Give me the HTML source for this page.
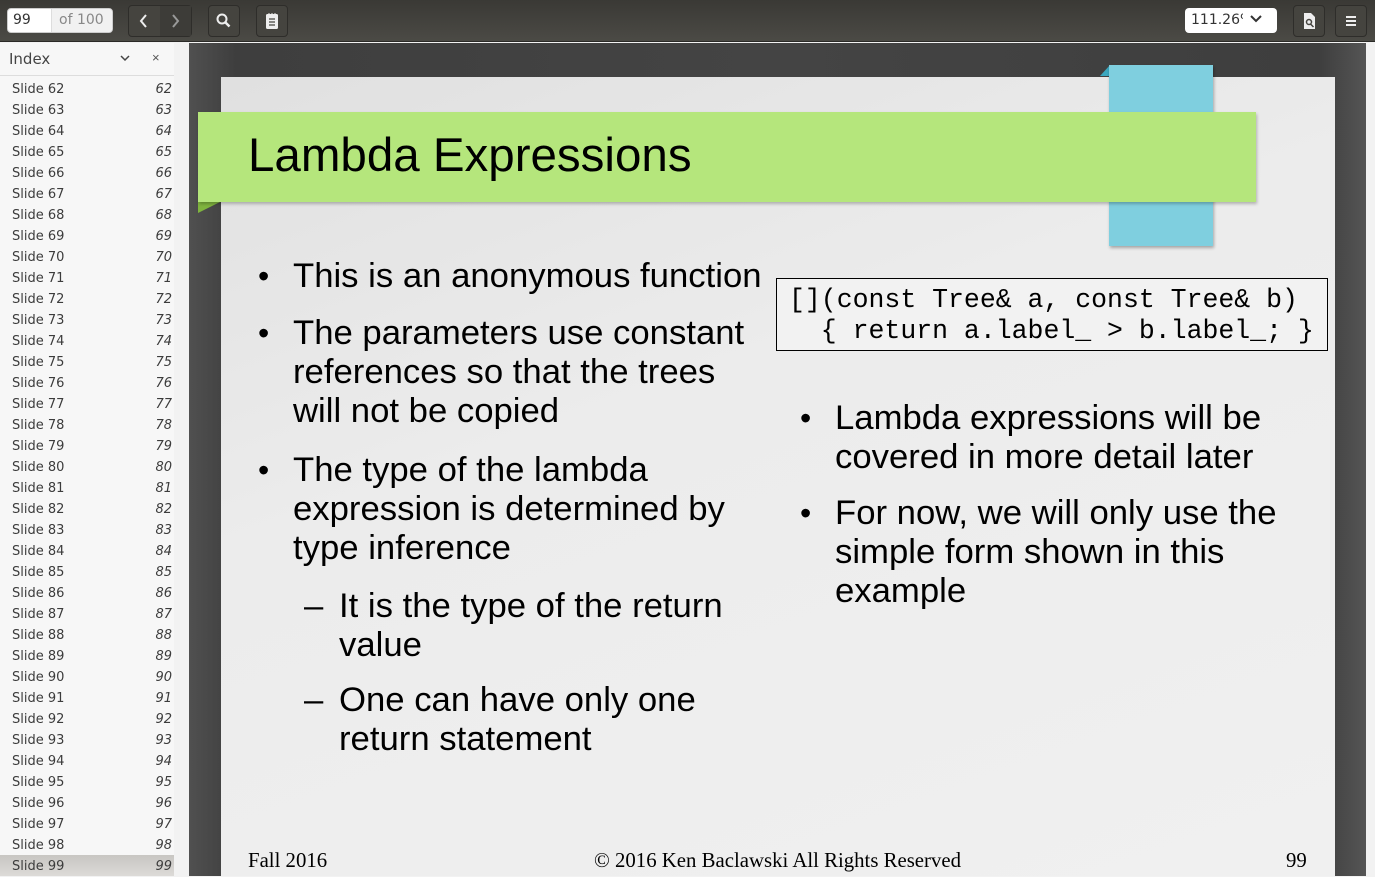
<!DOCTYPE html>
<html><head><meta charset="utf-8"><style>
*{margin:0;padding:0;box-sizing:border-box}
body{width:1375px;height:876px;overflow:hidden;position:relative;background:#f2f2f2;font-family:"Liberation Sans",sans-serif}
.tb{position:absolute;left:0;top:0;width:1375px;height:42px;background:linear-gradient(#3a3935,#4b4a45);border-bottom:1px solid #2b2a27}
.btn{position:absolute;top:5px;height:32px;border:1px solid #2e2d2a;border-radius:4px;background:#45443f}
.ab{position:absolute}
.side{position:absolute;left:0;top:43px;width:174px;height:833px;background:#f7f7f7}
.row{position:absolute;left:12px;width:160px;font-size:14px;color:#3c3c3c;height:21px;line-height:21px}
.row i{position:absolute;right:0;font-style:italic}
.view{position:absolute;left:189px;top:43px;width:1177px;height:833px;background:linear-gradient(90deg,#505050,#3e3e3e 4%,#444 50%,#3e3e3e 96%,#555)}
.slide{position:absolute;left:221px;top:77px;width:1114px;height:799px;background:linear-gradient(160deg,#e0e0e0,#ececec 40%,#f0f0f0)}
.t{position:absolute;font-size:34.7px;line-height:39px;color:#000;white-space:nowrap}
.dot{position:absolute;font-size:32px;line-height:39px}
</style></head><body>
<div class="tb">
 <div class="ab" style="left:7px;top:8px;width:106px;height:25px;background:#fff;border-radius:4px;border:1px solid #ccc"></div>
 <div class="ab" style="left:51px;top:9px;width:61px;height:23px;background:#f1f1f1;border-left:1px solid #ddd;border-radius:0 4px 4px 0"></div>
 <div class="ab" style="left:13px;top:12px;font-size:14px;color:#333;font-family:'DejaVu Sans',sans-serif">99</div>
 <div class="ab" style="left:59px;top:12px;font-size:14px;color:#888;font-family:'DejaVu Sans',sans-serif">of 100</div>
 <div class="btn" style="left:128px;width:64px"></div>
 <div class="ab" style="left:160px;top:6px;width:31px;height:30px;background:#3d3c38"></div>
 <svg class="ab" style="left:138px;top:13px" width="12" height="16"><path d="M8 2L3 8l5 6" stroke="#eee" stroke-width="2" fill="none"/></svg>
 <svg class="ab" style="left:170px;top:13px" width="12" height="16"><path d="M3 2l5 6-5 6" stroke="#999" stroke-width="2" fill="none"/></svg>
 <div class="btn" style="left:208px;width:32px"></div>
 <svg class="ab" style="left:215px;top:12px" width="18" height="18"><circle cx="7" cy="7" r="4.5" stroke="#eee" stroke-width="2" fill="none"/><path d="M10.5 10.5l4 4" stroke="#eee" stroke-width="2.5"/></svg>
 <div class="btn" style="left:256px;width:32px"></div>
 <svg class="ab" style="left:264px;top:12px" width="16" height="18"><rect x="2" y="2" width="12" height="15" rx="1.5" fill="#eee"/><path d="M5 7h6M5 10h6M5 13h6" stroke="#45443f" stroke-width="1.3"/><path d="M5 1v3M8 1v3M11 1v3" stroke="#eee"/></svg>
 <div class="ab" style="left:1185px;top:8px;width:92px;height:25px;background:#fff;border-radius:4px"></div>
 <div class="ab" style="left:1191px;top:12px;font-size:14px;color:#333;font-family:'DejaVu Sans',sans-serif;width:52px;overflow:hidden;white-space:nowrap">111.26%</div>
 <svg class="ab" style="left:1249px;top:14px" width="14" height="10"><path d="M2 2l5 5 5-5" stroke="#333" stroke-width="2" fill="none"/></svg>
 <div class="btn" style="left:1293px;width:32px"></div>
 <svg class="ab" style="left:1302px;top:12px" width="14" height="18"><path d="M2 1h7l4 4v12H2z" fill="#eee"/><circle cx="7" cy="10" r="2.5" stroke="#45443f" stroke-width="1.5" fill="none"/><path d="M8.5 12l3 3" stroke="#45443f" stroke-width="1.5"/></svg>
 <div class="btn" style="left:1335px;width:32px"></div>
 <svg class="ab" style="left:1344px;top:14px" width="14" height="14"><path d="M2 3h10M2 7h10M2 11h10" stroke="#eee" stroke-width="2"/></svg>
</div>
<div class="side">
 <div class="ab" style="left:9px;top:7px;font-size:15px;color:#444;font-family:'DejaVu Sans',sans-serif">Index</div>
 <svg class="ab" style="left:119px;top:11px" width="12" height="8"><path d="M2 2l4 4 4-4" stroke="#444" stroke-width="1.5" fill="none"/></svg>
 <div class="ab" style="left:152px;top:7px;font-size:13px;color:#555">×</div>
 <div class="ab" style="left:0;top:32px;width:174px;height:1px;background:#ddd"></div>
</div>
<div class="ab" style="left:0;top:855px;width:174px;height:21px;background:linear-gradient(#c8c6c2,#dcdad7)"></div>
<div id="rows"></div>
<div class="view"></div>
<div class="slide"></div>
<div class="ab" style="left:1100px;top:65px;width:0;height:0;border-left:10px solid transparent;border-bottom:11px solid #3aa8c0"></div>
<div class="ab" style="left:1109px;top:65px;width:104px;height:181px;background:#7fcfdf;box-shadow:1px 2px 3px rgba(0,0,0,.3)"></div>
<div class="ab" style="left:198px;top:202px;width:0;height:0;border-top:11px solid #7fb43e;border-left:22px solid transparent;transform:scaleX(-1)"></div>
<div class="ab" style="left:198px;top:112px;width:1058px;height:90px;background:#b5e67c;box-shadow:1px 2px 3px rgba(0,0,0,.25)"></div>
<div class="ab" style="left:248px;top:128px;font-size:47.5px;line-height:56px;white-space:nowrap">Lambda Expressions</div>

<div class="dot" style="left:258px;top:257px">•</div><div class="t" style="left:293px;top:257px">This is an anonymous function</div>
<div class="dot" style="left:258px;top:314px">•</div><div class="t" style="left:293px;top:314px">The parameters use constant<br>references so that the trees<br>will not be copied</div>
<div class="dot" style="left:258px;top:451px">•</div><div class="t" style="left:293px;top:451px">The type of the lambda<br>expression is determined by<br>type inference</div>
<div class="t" style="left:304px;top:587px">–</div><div class="t" style="left:339px;top:587px">It is the type of the return<br>value</div>
<div class="t" style="left:304px;top:681px">–</div><div class="t" style="left:339px;top:681px">One can have only one<br>return statement</div>
<div class="dot" style="left:800px;top:399px">•</div><div class="t" style="left:835px;top:399px">Lambda expressions will be<br>covered in more detail later</div>
<div class="dot" style="left:800px;top:494px">•</div><div class="t" style="left:835px;top:494px">For now, we will only use the<br>simple form shown in this<br>example</div>

<div class="ab" style="left:776px;top:278px;width:552px;height:73px;border:1.5px solid #000;background:#f2f2f2"></div>
<pre class="ab" style="left:789px;top:285px;font-family:'Liberation Mono',monospace;font-size:26.5px;line-height:31px;color:#000">[](const Tree&amp; a, const Tree&amp; b)
  { return a.label_ &gt; b.label_; }</pre>

<div class="ab" style="left:248px;top:849px;font-family:'Liberation Serif',serif;font-size:20.8px;white-space:nowrap">Fall 2016</div>
<div class="ab" style="left:594px;top:849px;font-family:'Liberation Serif',serif;font-size:20.8px;white-space:nowrap">© 2016 Ken Baclawski All Rights Reserved</div>
<div class="ab" style="left:1286px;top:849px;font-family:'Liberation Serif',serif;font-size:20.8px">99</div>
<script>
var h='';for(var n=62;n<=99;n++){h+='<div class="row" style="top:'+(79+(n-62)*21)+'px;font-family:\'DejaVu Sans\',sans-serif;font-size:13px">Slide '+n+'<i>'+n+'</i></div>';}
document.getElementById('rows').innerHTML=h;
</script>
</body></html>
